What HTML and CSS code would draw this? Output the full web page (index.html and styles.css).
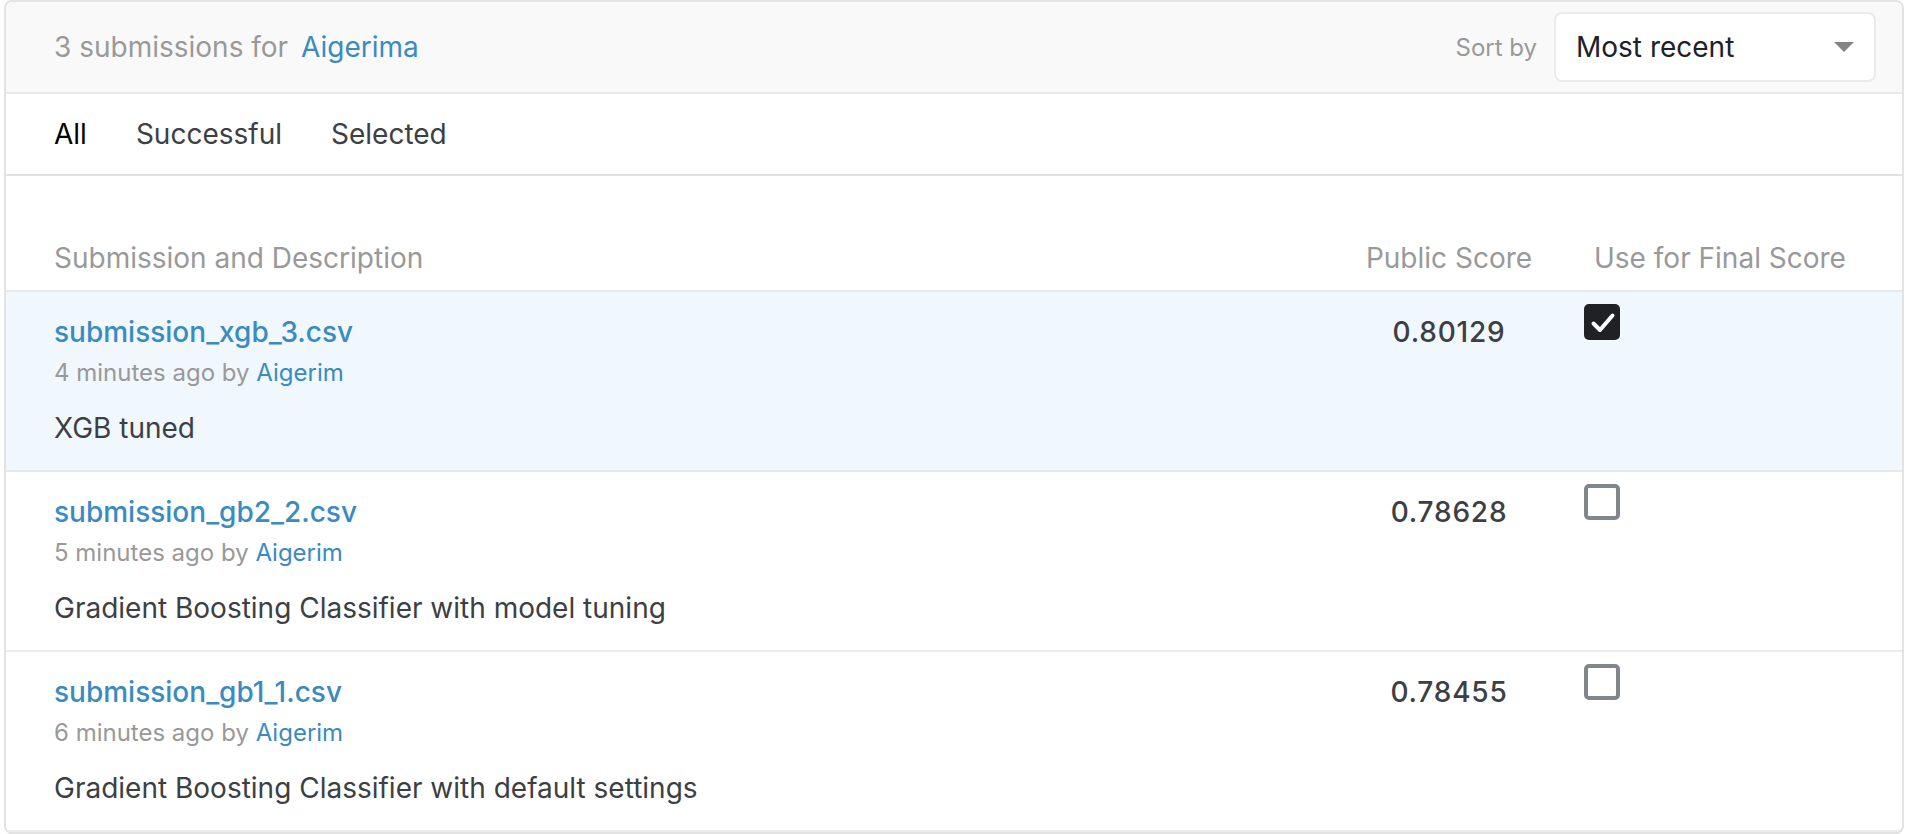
FILE: index.html
```html
<!DOCTYPE html>
<html lang="en">
<head>
<meta charset="utf-8">
<title>Submissions</title>
<link rel="stylesheet" href="styles.css">
</head>
<body>
<div class="panel">
  <header class="panel-header">
    <div class="title">3 submissions for <a class="link title-link" href="#">Aigerima</a></div>
    <div class="sort">
      <span class="sort-label">Sort by</span>
      <div class="select">
        <span class="select-value">Most recent</span>
        <svg class="select-arrow" width="20" height="10" viewBox="0 0 20 10"><path d="M0 0H20L10 10Z" fill="#858585"/></svg>
      </div>
    </div>
  </header>

  <nav class="tabs">
    <span class="tab active">All</span>
    <span class="tab">Successful</span>
    <span class="tab">Selected</span>
  </nav>

  <div class="table">
    <div class="grid thead">
      <div class="th">Submission and Description</div>
      <div class="th center">Public Score</div>
      <div class="th">Use for Final Score</div>
    </div>

    <div class="grid row selected">
      <div class="cell-main">
        <a class="file" href="#">submission_xgb_3.csv</a>
        <div class="meta">4 minutes ago by <a class="link" href="#">Aigerim</a></div>
        <div class="desc">XGB tuned</div>
      </div>
      <div class="score">0.80129</div>
      <div class="check-cell">
        <span class="checkbox checked"><svg width="36" height="36" viewBox="0 0 36 36"><path d="M9.5 19.5L16 26L28.5 11.5" fill="none" stroke="#fff" stroke-width="4" stroke-linecap="round" stroke-linejoin="round"/></svg></span>
      </div>
    </div>

    <div class="grid row">
      <div class="cell-main">
        <a class="file" href="#">submission_gb2_2.csv</a>
        <div class="meta">5 minutes ago by <a class="link" href="#">Aigerim</a></div>
        <div class="desc">Gradient Boosting Classifier with model tuning</div>
      </div>
      <div class="score">0.78628</div>
      <div class="check-cell"><span class="checkbox"></span></div>
    </div>

    <div class="grid row">
      <div class="cell-main">
        <a class="file" href="#">submission_gb1_1.csv</a>
        <div class="meta">6 minutes ago by <a class="link" href="#">Aigerim</a></div>
        <div class="desc">Gradient Boosting Classifier with default settings</div>
      </div>
      <div class="score">0.78455</div>
      <div class="check-cell"><span class="checkbox"></span></div>
    </div>
  </div>
</div>
</body>
</html>
```

FILE: styles.css
```css
* { box-sizing: border-box; }

html, body {
  margin: 0;
  padding: 0;
  background: #ffffff;
}

body {
  font-family: "Inter", "Noto Sans", sans-serif;
  color: #3c4043;
  font-size: 28px;
}

a { text-decoration: none; }

.panel {
  margin: 0 8px 0 4px;
  border: 2px solid #e3e3e3;
  border-radius: 8px;
  overflow: hidden;
  background: #fff;
}

.panel-header {
  height: 92px;
  padding: 0 26px 0 48px;
  background: #f9f9f9;
  border-bottom: 2px solid #e8e8e8;
  display: flex;
  align-items: center;
  justify-content: space-between;
}

.title {
  color: #999999;
  font-size: 28px;
  line-height: 40px;
  white-space: nowrap;
}

.link {
  color: #3a8bbf;
}

.title-link {
  margin-left: 5px;
}

.sort {
  display: flex;
  align-items: center;
  gap: 17px;
}

.sort-label {
  color: #999999;
  font-size: 24px;
}

.select {
  width: 322px;
  height: 70px;
  background: #fff;
  border: 2px solid #ebebeb;
  border-radius: 8px;
  display: flex;
  align-items: center;
  justify-content: space-between;
  padding: 0 20px 0 20px;
}

.select-value {
  color: #202124;
  font-size: 28px;
}

.tabs {
  height: 82px;
  padding-left: 48px;
  border-bottom: 2px solid #e2e2e2;
  display: flex;
  align-items: center;
  gap: 49px;
}

.tab {
  font-size: 28px;
  color: #3c4043;
}

.tab.active {
  color: #000;
}

.grid {
  display: grid;
  grid-template-columns: 1fr 190px 260px;
  column-gap: 50px;
  padding: 0 48px;
}

.thead {
  padding-top: 62px;
  padding-bottom: 12px;
  border-bottom: 2px solid #e6eaee;
}

.th {
  color: #999999;
  font-size: 28px;
  line-height: 40px;
  white-space: nowrap;
}

.center { text-align: center; }

.row {
  padding-top: 20px;
  padding-bottom: 22px;
  border-bottom: 2px solid #ebebeb;
}

.row.selected {
  background: #f0f7fd;
  border-bottom-color: #e6eaee;
}

.cell-main {
  display: flex;
  flex-direction: column;
  align-items: flex-start;
}

.file {
  color: #3a8bbf;
  font-weight: 500;
  font-size: 28px;
  line-height: 40px;
}

.meta {
  color: #999999;
  font-size: 24px;
  line-height: 42px;
}

.desc {
  margin-top: 14px;
  color: #3c4043;
  font-size: 28px;
  line-height: 40px;
}

.score {
  text-align: center;
  font-size: 28px;
  line-height: 40px;
  font-weight: 500;
  color: #3c4043;
  letter-spacing: 0.8px;
}

.check-cell {
  margin-top: -8px;
  margin-left: -10px;
}

.checkbox {
  display: block;
  width: 36px;
  height: 36px;
  border: 4px solid #80868b;
  border-radius: 5px;
  background: #fff;
}

.checkbox.checked {
  border: none;
  background: #202124;
}

.checkbox.checked svg { display: block; }
```
